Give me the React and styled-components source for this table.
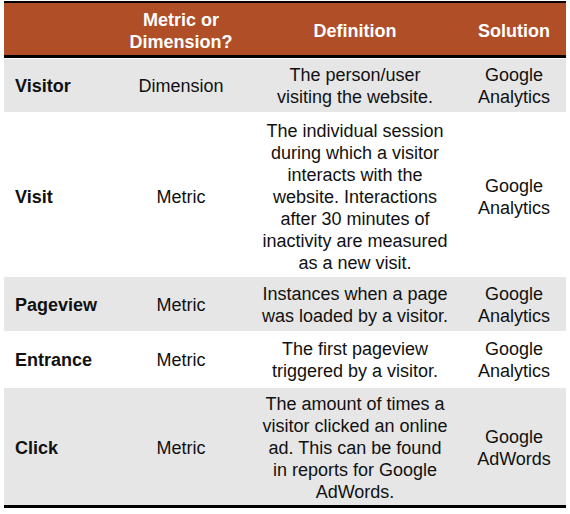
import React from "react";
import styled, { createGlobalStyle } from "styled-components";

const GlobalStyle = createGlobalStyle`
  html, body {
    margin: 0;
    padding: 0;
    background: #fff;
  }
  body {
    font-family: "Liberation Sans", Arial, sans-serif;
  }
`;

const Table = styled.div`
  width: 562px;
  margin: 1px 4px 0;
  border-top: 2px solid #000;
  border-bottom: 3px solid #000;
  font-family: "Liberation Sans", Arial, sans-serif;
  font-size: 18px;
  line-height: 22px;
  color: #111;
`;

const Row = styled.div`
  box-sizing: border-box;
  display: grid;
  grid-template-columns: 106px 142px 206px 108px;
  align-items: center;
  height: ${(p) => p.$h}px;
  padding-top: ${(p) => p.$pt || 0}px;
  background: ${(p) => (p.$shade ? "#e6e6e6" : "#fff")};
  margin-bottom: ${(p) => p.$gap || 0}px;
`;

const HeaderRow = styled(Row)`
  background: #af4e27;
  color: #fff;
  font-weight: bold;
  border-bottom: 3px solid #000;
  margin-bottom: 1px;
`;

const Cell = styled.div`
  text-align: ${(p) => (p.$left ? "left" : "center")};
  padding: ${(p) => (p.$left ? "0 0 0 11px" : "0")};
  padding-left: ${(p) => (p.$shift ? "4px" : undefined)};
  font-weight: ${(p) => (p.$bold ? "bold" : "inherit")};
  white-space: nowrap;
`;

const rows = [
  {
    name: "Visitor",
    kind: "Dimension",
    def: ["The person/user", "visiting the website."],
    sol: ["Google", "Analytics"],
    h: 53,
    shade: true,
  },
  {
    name: "Visit",
    kind: "Metric",
    def: [
      "The individual session",
      "during which a visitor",
      "interacts with the",
      "website. Interactions",
      "after 30 minutes of",
      "inactivity are measured",
      "as a new visit.",
    ],
    sol: ["Google", "Analytics"],
    h: 165,
    pt: 4,
  },
  {
    name: "Pageview",
    kind: "Metric",
    def: ["Instances when a page", "was loaded by a visitor."],
    sol: ["Google", "Analytics"],
    h: 54,
    pt: 2,
    shade: true,
    gap: 1,
  },
  {
    name: "Entrance",
    kind: "Metric",
    def: ["The first pageview", "triggered by a visitor."],
    sol: ["Google", "Analytics"],
    h: 55,
    gap: 1,
  },
  {
    name: "Click",
    kind: "Metric",
    def: [
      "The amount of times a",
      "visitor clicked an online",
      "ad. This can be found",
      "in reports for Google",
      "AdWords.",
    ],
    sol: ["Google", "AdWords"],
    h: 117,
    pt: 3,
    shade: true,
  },
];

const Lines = ({ items }) =>
  items.map((t, i) => (
    <React.Fragment key={i}>
      {t}
      {i < items.length - 1 && <br />}
    </React.Fragment>
  ));

export default function App() {
  return (
    <>
      <GlobalStyle />
      <Table>
        <HeaderRow $h={55} $pt={4}>
          <Cell $left />
          <Cell>
            Metric or
            <br />
            Dimension?
          </Cell>
          <Cell>Definition</Cell>
          <Cell $shift>Solution</Cell>
        </HeaderRow>
        {rows.map((r) => (
          <Row
            key={r.name}
            $h={r.h}
            $pt={r.pt}
            $shade={r.shade}
            $gap={r.gap}
          >
            <Cell $left $bold>
              {r.name}
            </Cell>
            <Cell>{r.kind}</Cell>
            <Cell>
              <Lines items={r.def} />
            </Cell>
            <Cell $shift>
              <Lines items={r.sol} />
            </Cell>
          </Row>
        ))}
      </Table>
    </>
  );
}
